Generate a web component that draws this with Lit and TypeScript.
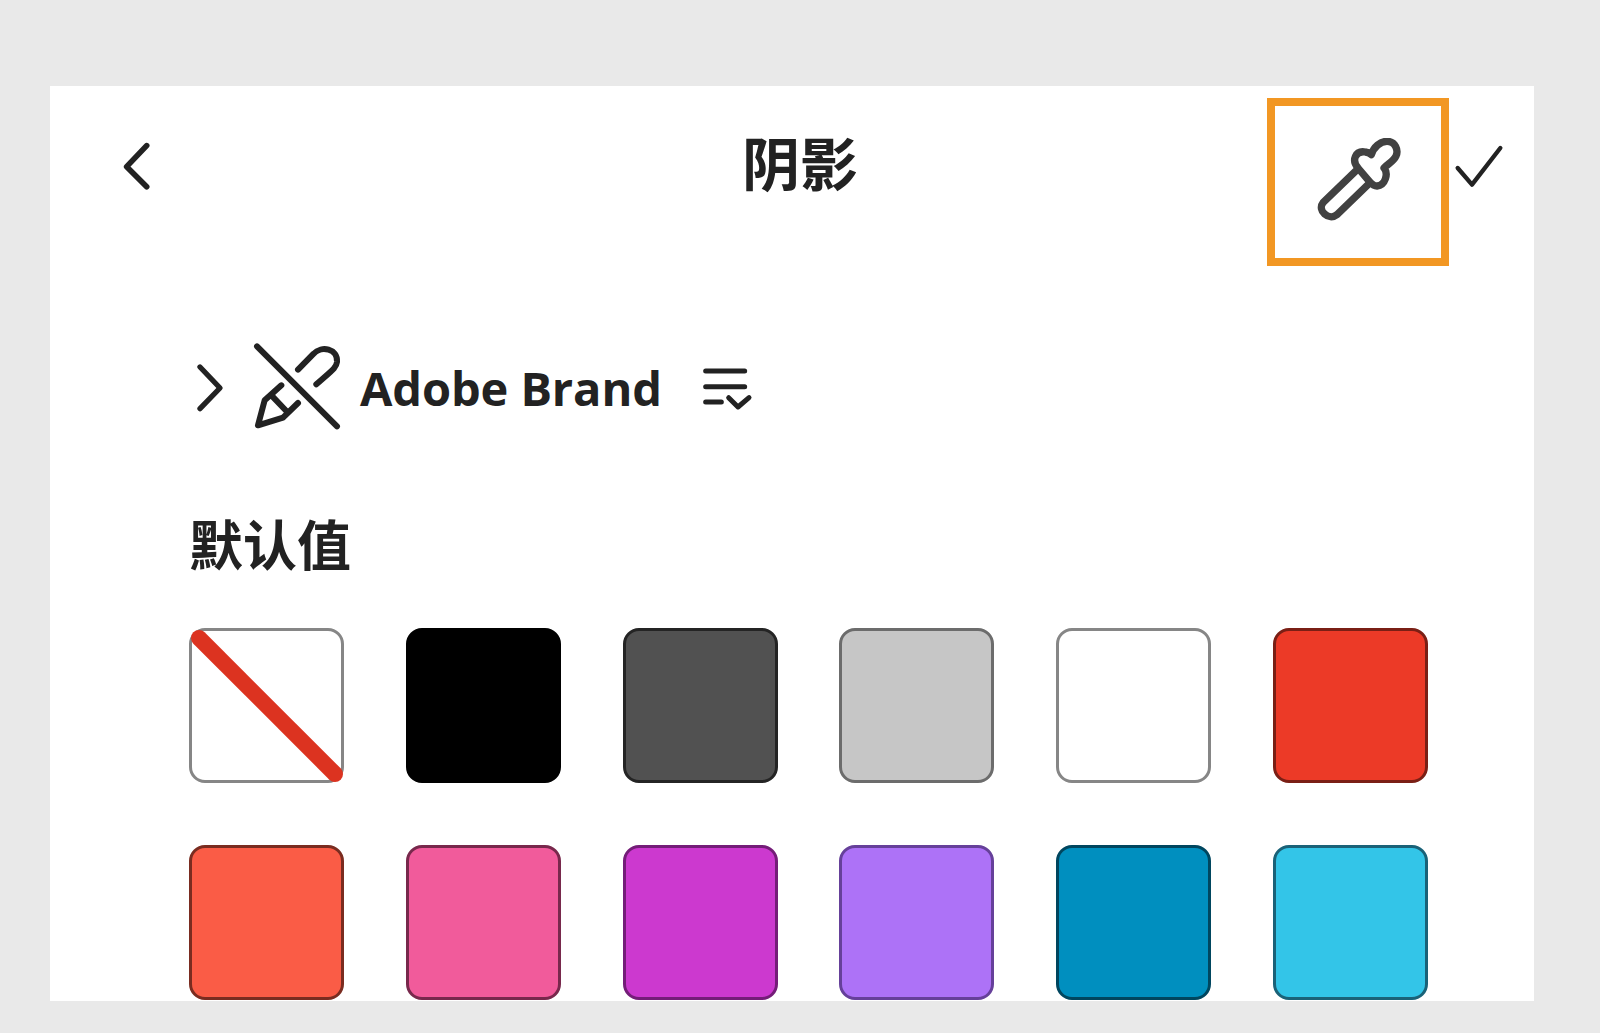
import { LitElement, html, css } from "lit";
import { customElement } from "lit/decorators.js";

const swatches = [
  { fill: "#ffffff", edge: "#868686", none: true },
  { fill: "#000000", edge: "#000000" },
  { fill: "#515151", edge: "#242424" },
  { fill: "#c6c6c6", edge: "#6c6c6c" },
  { fill: "#ffffff", edge: "#868686" },
  { fill: "#ec3a27", edge: "#7a1f15" },
  { fill: "#fa5c46", edge: "#7a2c20" },
  { fill: "#f15b9b", edge: "#78284c" },
  { fill: "#cc39cf", edge: "#741d78" },
  { fill: "#ad72f7", edge: "#66409a" },
  { fill: "#008fbf", edge: "#00465f" },
  { fill: "#33c5e8", edge: "#1a6278" },
];

@customElement("app-root")
export class AppRoot extends LitElement {
  static styles = css`
    :host {
      display: block;
      height: 1033px;
      background: #e9e9e9;
      overflow: hidden;
      padding: 86px 66px 0 50px;
      box-sizing: border-box;
    }
    * {
      box-sizing: border-box;
    }
    svg {
      display: block;
      flex: none;
      fill: none;
      stroke: #222;
      stroke-linecap: round;
      stroke-linejoin: round;
    }
    .panel {
      height: 915px;
      background: #fff;
      overflow: hidden;
    }
    .header {
      display: flex;
      align-items: center;
      height: 180px;
      padding-top: 12px;
    }
    .back {
      width: 32px;
      height: 52px;
      margin: 0 0 33px 70px;
    }
    .title {
      margin: 0 0 43px 590px;
      font: 700 58px/1 "Noto Sans CJK SC", sans-serif;
      color: #222;
    }
    .picker {
      display: flex;
      align-items: center;
      justify-content: center;
      width: 182px;
      height: 168px;
      margin-left: auto;
      border: 8px solid #f29723;
    }
    .dropper {
      width: 84px;
      height: 84px;
      margin: 0 0 4px 2px;
      stroke: #414141;
    }
    .check {
      width: 52px;
      height: 48px;
      margin: 0 29px 29px 4px;
    }
    .content {
      padding-left: 139px;
    }
    .brand {
      display: flex;
      align-items: center;
      height: 84px;
      margin-top: 80px;
    }
    .expand {
      width: 30px;
      height: 52px;
      margin-left: 6px;
    }
    .pencil {
      width: 90px;
      height: 90px;
      margin-left: 28px;
    }
    .brand-name {
      margin-left: 17px;
      font: 700 47px/1 "Open Sans", sans-serif;
      color: #222;
      letter-spacing: -0.1px;
    }
    .sort {
      width: 50px;
      height: 45px;
      margin-left: 41px;
    }
    .label {
      margin-top: 83px;
      font: 700 54px/60px "Noto Sans CJK SC", sans-serif;
      color: #222;
    }
    .grid {
      display: grid;
      grid-template-columns: repeat(6, 155px);
      gap: 62px 61.8px;
      margin-top: 55px;
    }
    .swatch {
      position: relative;
      height: 155px;
      border: 3px solid;
      border-radius: 16px;
    }
    .slash {
      position: absolute;
      inset: -3px;
      width: 155px;
      height: 155px;
      stroke: #dc3320;
    }
  `;

  render() {
    return html`
      <div class="panel">
        <div class="header">
          <svg class="back" viewBox="360 240 96 156" stroke-width="17">
            <path d="M440 257 380 320 440 380" />
          </svg>
          <div class="title">阴影</div>
          <div class="picker">
            <svg class="dropper" viewBox="235 168 252 252" stroke-width="22">
              <path d="M350 268 253 362C235 385 270 418 295 398L388 308" />
              <path
                d="M358 258C338 235 350 205 380 210 388 211 394 214 398 218 405 195 425 178 445 178 470 178 480 205 472 222 465 238 448 245 436 258 450 275 440 310 415 312 405 312 398 305 392 298Z"
              />
            </svg>
          </div>
          <svg class="check" viewBox="640 190 156 144" stroke-width="13">
            <path d="M654 262 697 312 782 202" />
          </svg>
        </div>
        <div class="content">
          <div class="brand">
            <svg class="expand" viewBox="75 90 90 156" stroke-width="16">
              <path d="M90 105 150 168 90 230" />
            </svg>
            <svg class="pencil" viewBox="250 38 270 270" stroke-width="18">
              <path d="M262 48 502 288" />
              <path
                d="M385 118 432 70C455 45 505 55 502 95 500 112 490 118 440 162"
              />
              <path d="M335 165 285 210 265 285 340 262 385 218" />
              <path d="M306 196 350 242" />
            </svg>
            <div class="brand-name">Adobe Brand</div>
            <svg class="sort" viewBox="100 75 150 135" stroke-width="15">
              <path d="M108 90H225M108 137H225M108 183H155" />
              <path d="M177 170 205 198 238 170" />
            </svg>
          </div>
          <div class="label">默认值</div>
          <div class="grid">
            ${swatches.map(
              (s) => html`
                <div
                  class="swatch"
                  style="background:${s.fill};border-color:${s.edge}"
                >
                  ${s.none
                    ? html`<svg class="slash" viewBox="0 0 155 155" stroke-width="16">
                        <path d="M10 10 146 146" />
                      </svg>`
                    : ""}
                </div>
              `
            )}
          </div>
        </div>
      </div>
    `;
  }
}
